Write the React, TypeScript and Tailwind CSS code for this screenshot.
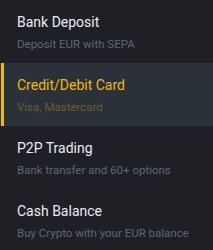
import React from "react";

const items = [
  { title: "Bank Deposit", sub: "Deposit EUR with SEPA", active: false },
  { title: "Credit/Debit Card", sub: "Visa, Mastercard", active: true },
  { title: "P2P Trading", sub: "Bank transfer and 60+ options", active: false },
  { title: "Cash Balance", sub: "Buy Crypto with your EUR balance", active: false },
];

export default function App() {
  return (
    <div
      className="w-[213px] h-[250px] bg-[#1e2026] flex flex-col overflow-hidden"
      style={{ fontFamily: "Roboto, 'Noto Sans', sans-serif" }}
    >
      {items.map((it) => (
        <div
          key={it.title}
          className={`relative h-[63px] shrink-0 flex flex-col justify-center pl-[17px] ${
            it.active ? "bg-[#2b3139]" : ""
          }`}
        >
          {it.active && <div className="absolute left-[1px] top-0 bottom-0 w-[3px] bg-[#f0b90b]" />}
          <div
            className={`text-[14px] leading-[20px] ${it.active ? "text-[#f0b90b]" : "text-[#eaecef]"}`}
          >
            {it.title}
          </div>
          <div
            className={`text-[11.5px] leading-[16px] mt-[4px] ${it.active ? "text-[#6b5d2a]" : "text-[#5e6673]"}`}
          >
            {it.sub}
          </div>
        </div>
      ))}
    </div>
  );
}
